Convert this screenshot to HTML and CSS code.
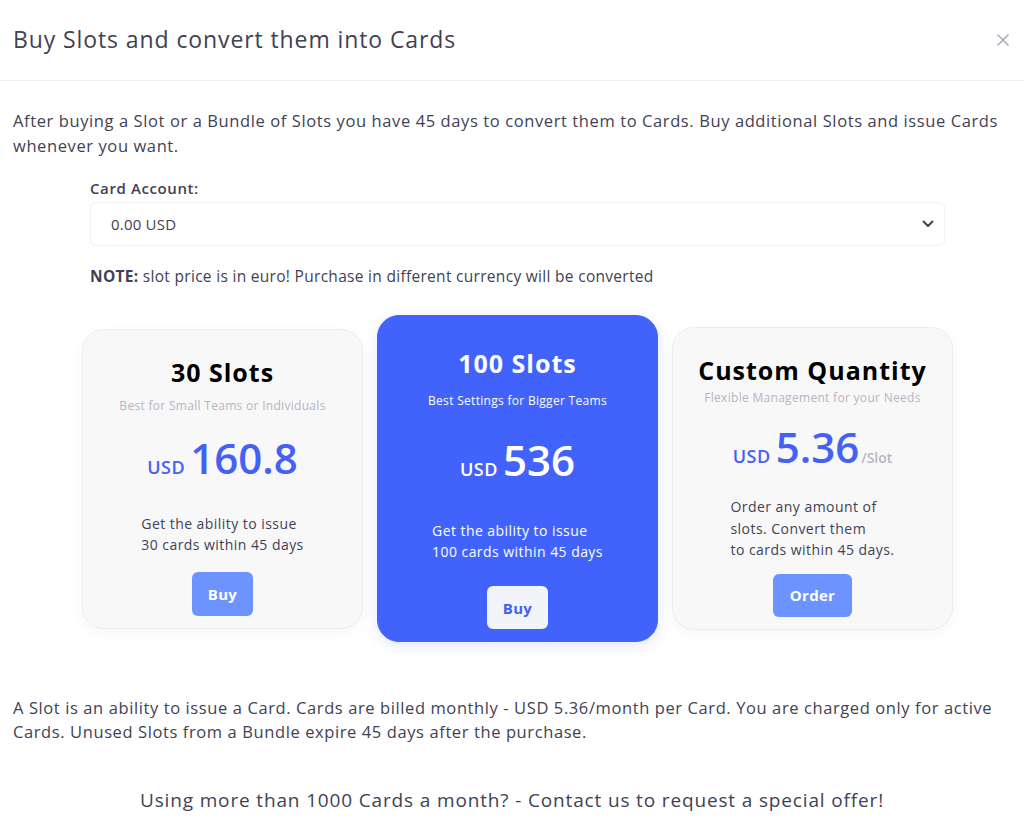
FILE: index.html
```html
<!DOCTYPE html>
<html lang="en">
<head>
    <meta charset="UTF-8">
    <meta name="viewport" content="width=device-width, initial-scale=1.0">
    <title>Buy Slots</title>
    <link rel="stylesheet" href="styles.css">
</head>
<body>
    <div class="modal">
        <div class="modal-header">
            <h2>Buy Slots and convert them into Cards</h2>
            <span class="close">
                <svg width="12" height="12" viewBox="0 0 12 12"><path d="M1 1L11 11M11 1L1 11" stroke="#a9abbb" stroke-width="1.6" stroke-linecap="round"/></svg>
            </span>
        </div>

        <div class="modal-body">
            <p class="intro">After buying a Slot or a Bundle of Slots you have 45 days to convert them to Cards. Buy additional Slots and issue Cards whenever you want.</p>

            <div class="account">
                <label for="account">Card Account:</label>
                <div class="select">
                    <span>0.00 USD</span>
                    <svg width="12" height="8" viewBox="0 0 12 8"><path d="M1.5 1.5L6 6L10.5 1.5" fill="none" stroke="#3f4254" stroke-width="2" stroke-linecap="round" stroke-linejoin="round"/></svg>
                </div>
                <p class="note"><strong>NOTE:</strong> slot price is in euro! Purchase in different currency will be converted</p>
            </div>

            <div class="plans">
                <div class="plan plan-small">
                    <h3>30 Slots</h3>
                    <div class="sub">Best for Small Teams or Individuals</div>
                    <div class="price"><span class="cur">USD</span><span class="amount">160.8</span></div>
                    <div class="desc"><p>Get the ability to issue<br>30 cards within 45 days</p></div>
                    <button type="button">Buy</button>
                </div>

                <div class="plan plan-main">
                    <h3>100 Slots</h3>
                    <div class="sub">Best Settings for Bigger Teams</div>
                    <div class="price"><span class="cur">USD</span><span class="amount">536</span></div>
                    <div class="desc"><p>Get the ability to issue<br>100 cards within 45 days</p></div>
                    <button type="button">Buy</button>
                </div>

                <div class="plan plan-custom">
                    <h3>Custom Quantity</h3>
                    <div class="sub">Flexible Management for your Needs</div>
                    <div class="price"><span class="cur">USD</span><span class="amount">5.36</span><span class="per">/Slot</span></div>
                    <div class="desc"><p>Order any amount of<br>slots. Convert them<br>to cards within 45 days.</p></div>
                    <button type="button">Order</button>
                </div>
            </div>

            <p class="info">A Slot is an ability to issue a Card. Cards are billed monthly - USD 5.36/month per Card. You are charged only for active Cards. Unused Slots from a Bundle expire 45 days after the purchase.</p>

            <p class="offer">Using more than 1000 Cards a month? - Contact us to request a special offer!</p>
        </div>
    </div>
</body>
</html>
```

FILE: styles.css
```css
body {
    font-family: "Open Sans", sans-serif;
    background-color: #fff;
    color: #3f4254;
    margin: 0;
    padding: 0;
}

.modal-header {
    height: 80px;
    display: flex;
    align-items: center;
    justify-content: space-between;
    padding: 0 15px 0 13px;
    border-bottom: 1px solid #eff2f5;
}

.modal-header h2 {
    margin: 0 0 2px;
    font-size: 23px;
    letter-spacing: 0.9px;
    font-weight: 400;
    color: #3f4254;
}

.close {
    display: flex;
    width: 12px;
    height: 12px;
}

.modal-body {
    padding: 27px 13px 0 13px;
}

.intro {
    margin: 0;
    font-size: 16.5px;
    letter-spacing: 0.6px;
    line-height: 25px;
}

.account {
    margin: 20px 66px 0 77px;
}

.account label {
    display: block;
    font-size: 15px;
    letter-spacing: 0.6px;
    line-height: 20px;
    font-weight: 600;
}

.select {
    margin-top: 4px;
    height: 42px;
    border: 1px solid #f1f1f4;
    border-radius: 6px;
    display: flex;
    align-items: center;
    justify-content: space-between;
    padding: 0 4px 0 20px;
    font-size: 15px;
    letter-spacing: 0.2px;
}

.select svg {
    margin-right: 6px;
}

.note {
    margin: 19px 0 0;
    font-size: 15.5px;
    letter-spacing: 0.3px;
    line-height: 22px;
}

.plans {
    display: flex;
    align-items: center;
    gap: 14px;
    margin: 28px 0 0 69px;
}

.plan {
    width: 281px;
    box-sizing: border-box;
    text-align: center;
    border-radius: 22px;
    background: #f8f8f9;
    border: 1px solid #ededf2;
    box-shadow: 0 4px 14px rgba(0, 0, 0, 0.04);
    padding: 27px 0 12px;
}

.plan h3 {
    margin: 0;
    font-size: 25px;
    letter-spacing: 1px;
    line-height: 30px;
    font-weight: 700;
    color: #000;
}

.plan .sub {
    font-size: 12px;
    letter-spacing: 0.3px;
    line-height: 16px;
    color: #b5b5c3;
    margin-top: 11px;
}

.price {
    margin-top: 20px;
    height: 48px;
    display: flex;
    align-items: baseline;
    justify-content: center;
    color: #4361f5;
    font-weight: 600;
}

.price .cur {
    font-size: 18px;
    letter-spacing: 0.5px;
    margin-right: 5px;
}

.price .amount {
    font-size: 42px;
    line-height: 48px;
}

.price .per {
    font-size: 14px;
    color: #b5b5c3;
    margin-left: 2px;
}

.desc {
    margin-top: 31px;
}

.desc p {
    display: inline-block;
    text-align: left;
    margin: 0;
    font-size: 14px;
    letter-spacing: 0.45px;
    line-height: 21px;
    color: #3f4254;
}

.plan button {
    margin-top: 17px;
    height: 44px;
    padding: 0 16px;
    border: none;
    border-radius: 6px;
    background: #6c93ff;
    color: #fff;
    font-family: inherit;
    font-size: 15px;
    letter-spacing: 0.3px;
    font-weight: 700;
}

.plan-main {
    background: #4263fb;
    border-color: #4263fb;
    padding-top: 32px;
    box-shadow: 0 4px 14px rgba(66, 99, 251, 0.15);
}

.plan-main h3,
.plan-main .sub,
.plan-main .price,
.plan-main .desc p {
    color: #fff;
}

.plan-main .sub {
    margin-top: 15px;
}

.plan-main .price {
    margin-top: 27px;
}

.plan-main .desc {
    margin-top: 36px;
}

.plan-main button {
    margin-top: 24px;
    height: 43px;
    background: #f1f4f9;
    color: #4361f5;
}

.plan-custom .sub {
    margin-top: 5px;
}

.plan-custom .price {
    margin-top: 17px;
}

.plan-custom .desc {
    margin-top: 25px;
}

.plan-custom .desc p {
    line-height: 21.5px;
}

.plan-custom button {
    margin-top: 13px;
    height: 43px;
    padding: 0 17px;
}

.info {
    margin: 54px 0 0;
    font-size: 16.5px;
    letter-spacing: 0.6px;
    line-height: 24px;
}

.offer {
    margin: 44px 0 0;
    text-align: center;
    font-size: 19px;
    letter-spacing: 0.85px;
    line-height: 24px;
}
```
